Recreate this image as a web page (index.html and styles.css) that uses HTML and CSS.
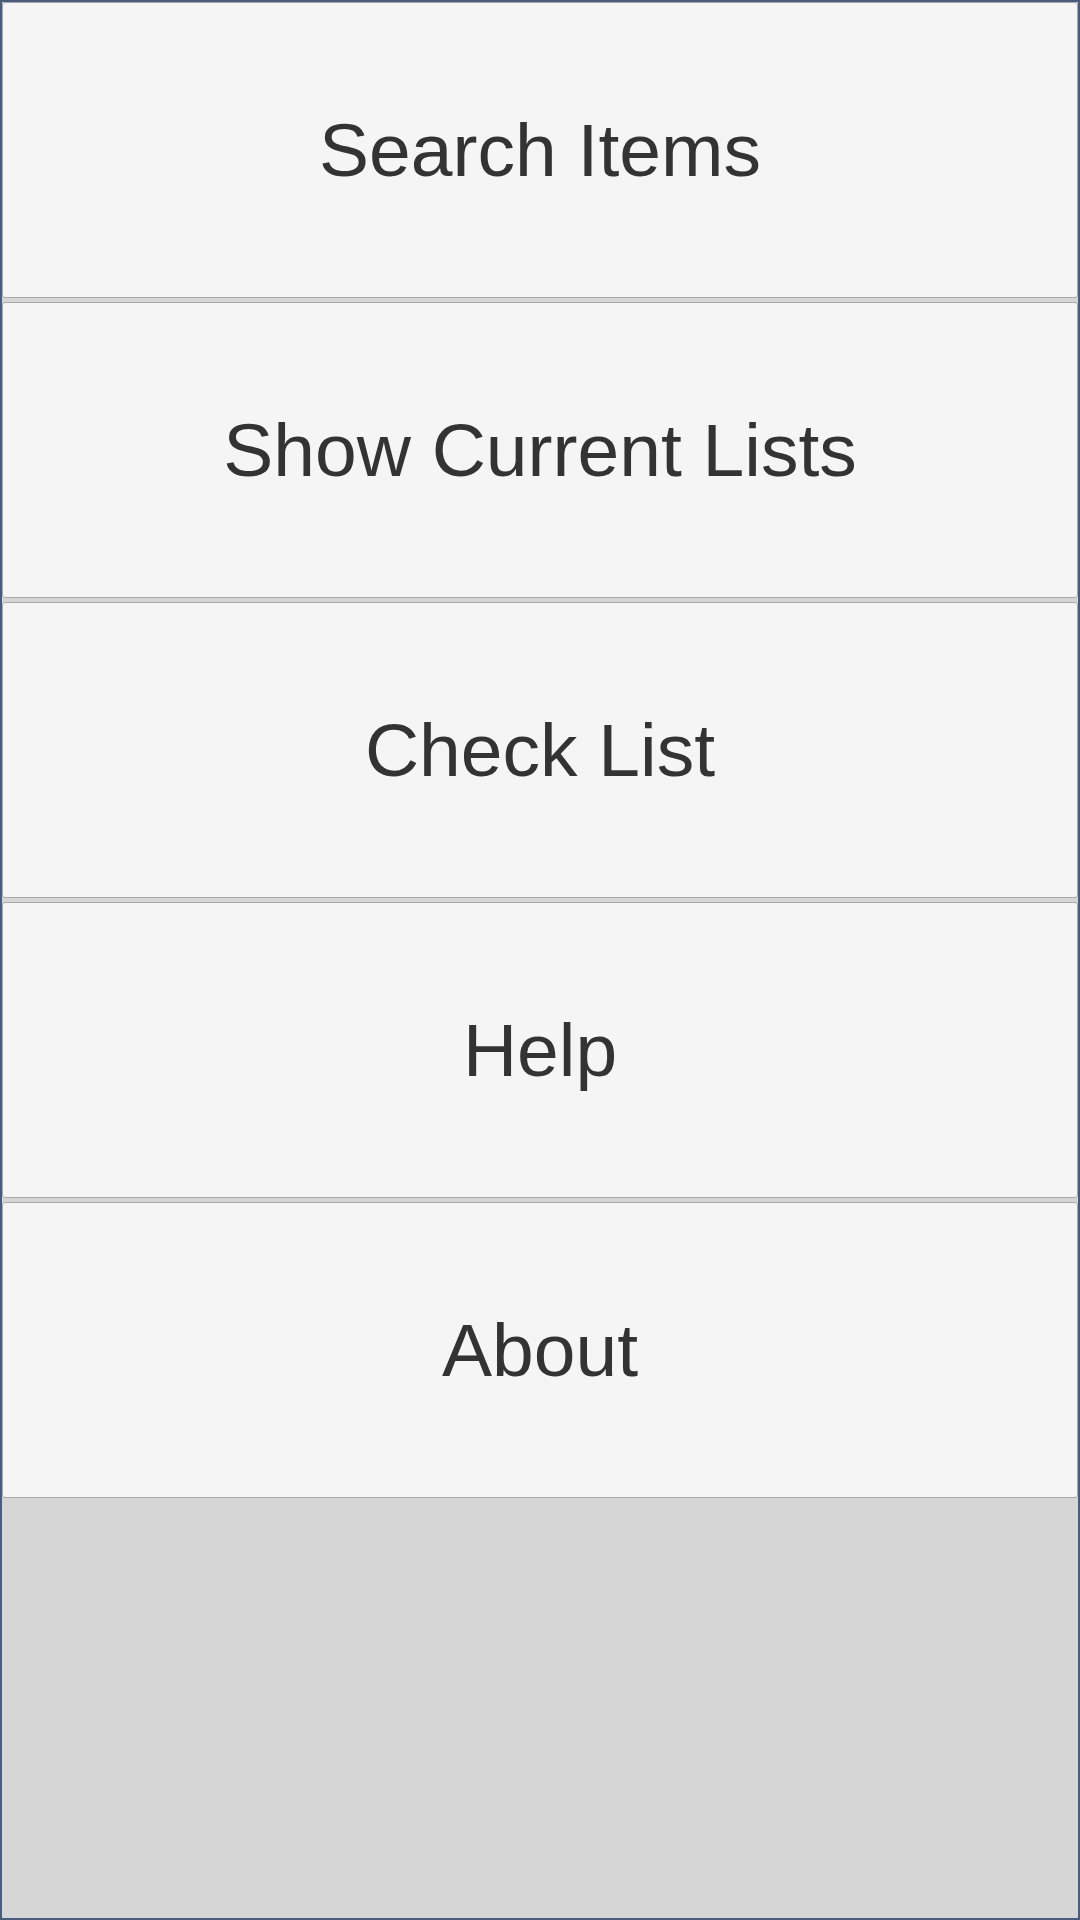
FILE: index.html
```html
<!DOCTYPE html>
<html>
<head>
<meta charset="utf-8">
<link rel="stylesheet" href="styles.css">
</head>
<body>
<div class="screen">
  <div class="menu">
    <button class="menu-btn">Search Items</button>
    <button class="menu-btn">Show Current Lists</button>
    <button class="menu-btn">Check List</button>
    <button class="menu-btn">Help</button>
    <button class="menu-btn">About</button>
  </div>
</div>
</body>
</html>
```
FILE: styles.css
```css
html, body {
  margin: 0;
  padding: 0;
}
body {
  width: 1080px;
  height: 1920px;
  overflow: hidden;
}
.screen {
  box-sizing: border-box;
  width: 1080px;
  height: 1920px;
  border: 2px solid #4a5c7e;
  background: #d6d6d6;
}
.menu {
  display: flex;
  flex-direction: column;
  gap: 4px;
}
.menu-btn {
  box-sizing: border-box;
  height: 296px;
  width: 100%;
  margin: 0;
  padding: 0;
  border: 1px solid #a8a8a8;
  border-radius: 3px;
  background: #f5f5f5;
  color: #333333;
  font-family: "Liberation Sans", Arial, sans-serif;
  font-size: 75px;
  text-align: center;
}
```
